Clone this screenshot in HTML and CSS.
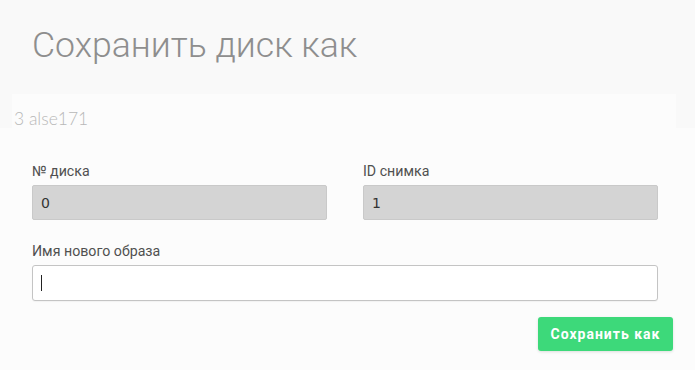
FILE: index.html
```html
<!DOCTYPE html>
<html lang="ru">
<head>
<meta charset="utf-8">
<title>Сохранить диск как</title>
<link rel="stylesheet" href="styles.css">
</head>
<body>
<div class="page">
  <header class="header">
    <h1 class="title">Сохранить диск как</h1>
  </header>
  <div class="sub">
    <span class="sub-text">3 alse171</span>
  </div>
  <section class="form">
    <div class="row two">
      <div class="field">
        <label class="label">№ диска</label>
        <div class="input readonly">0</div>
      </div>
      <div class="field">
        <label class="label">ID снимка</label>
        <div class="input readonly">1</div>
      </div>
    </div>
    <div class="row">
      <div class="field">
        <label class="label">Имя нового образа</label>
        <div class="input editable"><span class="caret"></span></div>
      </div>
    </div>
    <div class="actions">
      <button class="btn">Сохранить как</button>
    </div>
  </section>
</div>
</body>
</html>
```

FILE: styles.css
```css
html, body {
  margin: 0;
  padding: 0;
}
body {
  background: #f9f9f9;
  font-family: Roboto, "Noto Sans", sans-serif;
  width: 695px;
  height: 370px;
  overflow: hidden;
}
.page {
  display: flex;
  flex-direction: column;
}
.header {
  height: 94px;
  padding: 24px 0 0 32px;
  box-sizing: border-box;
}
.title {
  margin: 0;
  font-weight: 300;
  font-size: 35.6px;
  line-height: 42px;
  color: #8e8e8e;
}
.sub {
  margin-left: 12px;
  width: 664px;
  height: 34px;
  background: #fcfcfc;
  padding: 15px 0 0 2px;
  box-sizing: border-box;
}
.sub-text {
  font-family: Lato, sans-serif;
  font-weight: 300;
  font-size: 17.5px;
  line-height: 19px;
  color: #b8b8b8;
  display: block;
}
.form {
  background: #fcfcfc;
  padding: 35px 37px 0 32px;
  height: 242px;
  box-sizing: border-box;
  display: flex;
  flex-direction: column;
}
.row {
  display: flex;
  margin-bottom: 23px;
}
.row + .row {
  margin-bottom: 16px;
}
.row.two {
  gap: 36px;
}
.field {
  flex: 1;
  display: flex;
  flex-direction: column;
}
.label {
  font-size: 14.2px;
  line-height: 16px;
  color: #505050;
  margin-bottom: 6px;
}
.input {
  height: 35px;
  box-sizing: border-box;
  border-radius: 2px;
  padding: 0 8px;
  display: flex;
  align-items: center;
  font-family: "DejaVu Sans", sans-serif;
  font-size: 14px;
  color: #333;
}
.readonly {
  background: #d4d4d4;
  border: 1px solid #c9c9c9;
}
.editable {
  background: #ffffff;
  border: 1px solid #c4c4c4;
  height: 36px;
  border-radius: 3px;
  box-shadow: 0 1px 1px rgba(0,0,0,0.04);
}
.caret {
  width: 1px;
  height: 16px;
  background: #222;
}
.actions {
  display: flex;
  justify-content: flex-end;
  margin-right: -15px;
}
.btn {
  width: 135px;
  height: 34px;
  border: none;
  border-radius: 3px;
  background: #3dd97a;
  color: #fff;
  font-family: Roboto, sans-serif;
  font-weight: 700;
  font-size: 14px;
  letter-spacing: 1px;
  box-shadow: 0 1px 3px rgba(0,0,0,0.12);
  padding: 0;
}
```
